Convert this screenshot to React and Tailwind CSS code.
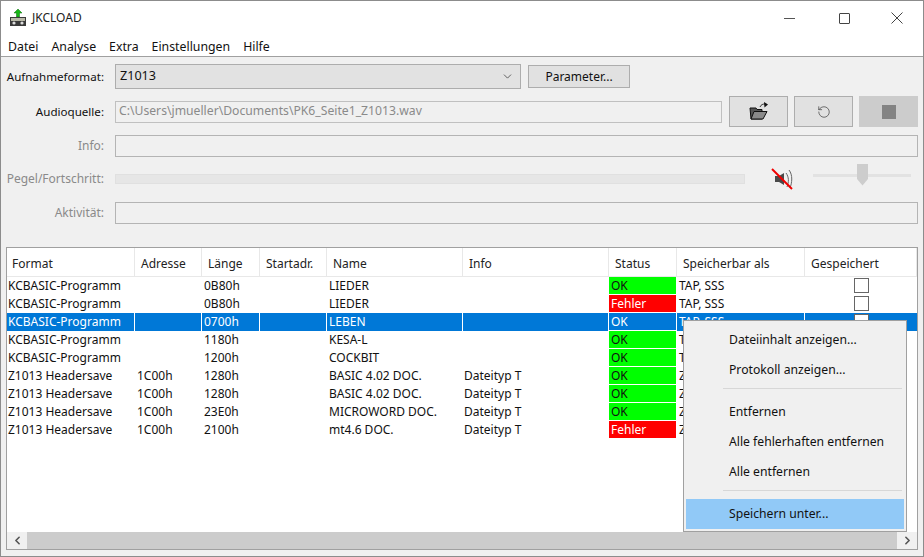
import { ChevronDown, ChevronLeft, ChevronRight, RotateCcw } from 'lucide-react';

const columns = 'grid grid-cols-[128px_67px_58px_67px_136px_146px_68px_128px_112px]';

const headers = ['Format', 'Adresse', 'Länge', 'Startadr.', 'Name', 'Info', 'Status', 'Speicherbar als', 'Gespeichert'];

const rows = [
  { format: 'KCBASIC-Programm', adresse: '', laenge: '0B80h', name: 'LIEDER', info: '', status: 'OK', als: 'TAP, SSS' },
  { format: 'KCBASIC-Programm', adresse: '', laenge: '0B80h', name: 'LIEDER', info: '', status: 'Fehler', als: 'TAP, SSS' },
  { format: 'KCBASIC-Programm', adresse: '', laenge: '0700h', name: 'LEBEN', info: '', status: 'OK', als: 'TAP, SSS', selected: true },
  { format: 'KCBASIC-Programm', adresse: '', laenge: '1180h', name: 'KESA-L', info: '', status: 'OK', als: 'TAP, SSS' },
  { format: 'KCBASIC-Programm', adresse: '', laenge: '1200h', name: 'COCKBIT', info: '', status: 'OK', als: 'TAP, SSS' },
  { format: 'Z1013 Headersave', adresse: '1C00h', laenge: '1280h', name: 'BASIC 4.02 DOC.', info: 'Dateityp T', status: 'OK', als: 'Z80' },
  { format: 'Z1013 Headersave', adresse: '1C00h', laenge: '1280h', name: 'BASIC 4.02 DOC.', info: 'Dateityp T', status: 'OK', als: 'Z80' },
  { format: 'Z1013 Headersave', adresse: '1C00h', laenge: '23E0h', name: 'MICROWORD DOC.', info: 'Dateityp T', status: 'OK', als: 'Z80' },
  { format: 'Z1013 Headersave', adresse: '1C00h', laenge: '2100h', name: 'mt4.6 DOC.', info: 'Dateityp T', status: 'Fehler', als: 'Z80' },
];

const Label = ({ children, enabled }) => (
  <span className={`w-[98px] shrink-0 whitespace-nowrap text-right ${enabled ? 'text-[11.6px] text-[#111]' : 'text-[12px] text-[#8a8a8a]'}`}>{children}</span>
);

const AppIcon = () => (
  <svg width="18" height="18" viewBox="0 0 18 18" className="shrink-0">
    <path d="M9 0 L13 4 H10.5 V8 H7.5 V4 H5 Z" fill="#16b816" stroke="#0b6b0b" strokeWidth="0.5" />
    <rect x="1" y="8" width="16" height="9" fill="#3a3a3a" />
    <rect x="2" y="9" width="14" height="3" fill="#b9b9a8" />
    <circle cx="5" cy="14" r="1.6" fill="#ddd" />
    <circle cx="13" cy="14" r="1.6" fill="#ddd" />
  </svg>
);

const FolderIcon = () => (
  <svg width="20" height="20" viewBox="0 0 20 20">
    <path d="M1 6 H7 L8 7.5 H13 V17 H2 Z" fill="#555" stroke="#111" strokeWidth="1" />
    <path d="M2 17 L5 9.5 H18 L14 17 Z" fill="#8a8a8a" stroke="#111" strokeWidth="1" />
    <path d="M11 5 C12 2.5 14 2 16 2" fill="none" stroke="#333" strokeWidth="1" />
    <path d="M15 0 L19 2.5 L15.5 5.5 Z" fill="#111" />
  </svg>
);

const MuteIcon = () => (
  <svg width="24" height="24" viewBox="0 0 24 24">
    <path d="M4 9 H8 L13 6 V18 L8 15 H4 Z" fill="#4a4a4a" />
    <path d="M15 6 C18 10 18 15 16 20 M18 3 C22 8 21 16 19 21" fill="none" stroke="#666" strokeWidth="1" />
    <path d="M1 2 L21 22" stroke="#f00000" strokeWidth="2" />
  </svg>
);

const Cell = ({ children, className = '' }) => (
  <div className={`h-[18px] overflow-hidden whitespace-nowrap leading-[18px] ${className}`}>{children}</div>
);

const TableRow = ({ row }) => {
  const sep = row.selected ? 'border-r border-white' : 'border-r border-transparent';
  const statusColor = row.status === 'OK' ? (row.selected ? '' : 'bg-[#00ff00] text-[#111]') : 'bg-[#ff0000] text-white';
  return (
    <div className={`${columns} ${row.selected ? 'bg-[#0078d7] text-white' : 'text-[#111]'}`}>
      <Cell className={`${sep} pl-[1px]`}>{row.format}</Cell>
      <Cell className={`${sep} pl-[2px]`}>{row.adresse}</Cell>
      <Cell className={`${sep} pl-[2px]`}>{row.laenge}</Cell>
      <Cell className={sep} />
      <Cell className={`${sep} pl-[2px]`}>{row.name}</Cell>
      <Cell className={`${sep} pl-[1px]`}>{row.info}</Cell>
      <Cell className={`border-r border-b border-white pl-[1px] ${statusColor}`}>
        <span className="pl-[1px]">{row.status}</span>
      </Cell>
      <Cell className={`${sep} pl-[2px]`}>{row.als}</Cell>
      <Cell className="flex justify-center">
        <span className="mt-[1px] h-[15px] w-[15px] border border-[#666] bg-white" />
      </Cell>
    </div>
  );
};

const MenuItem = ({ children, active }) => (
  <div className={`mx-[2px] flex h-[30px] items-center pl-[43px] text-[12.2px] text-[#111] ${active ? 'bg-[#91c9f7]' : ''}`}>{children}</div>
);

const MenuSeparator = () => <div className="mt-[3px] mb-[8px] ml-[39px] mr-[4px] h-px bg-[#d7d7d7]" />;

const ContextMenu = () => (
  <div className="absolute left-[682px] top-[319px] w-[224px] border border-[#a0a0a0] bg-[#f0f0f0] pt-[4px] pb-[2px]">
    <MenuItem>Dateiinhalt anzeigen...</MenuItem>
    <MenuItem>Protokoll anzeigen...</MenuItem>
    <MenuSeparator />
    <MenuItem>Entfernen</MenuItem>
    <MenuItem>Alle fehlerhaften entfernen</MenuItem>
    <MenuItem>Alle entfernen</MenuItem>
    <MenuSeparator />
    <MenuItem active>Speichern unter...</MenuItem>
  </div>
);

export default function App() {
  return (
    <div className="relative flex h-[557px] w-[924px] flex-col overflow-hidden border border-[#8c8c8c] bg-[#f0f0f0] font-['Noto_Sans','Open_Sans',sans-serif] text-[12px] text-[#111]">
      <div className="bg-white">
        <div className="flex h-[36px] items-center pb-[2px]">
          <div className="ml-[8px] flex items-center gap-[5px]">
            <AppIcon />
            <span className="text-[#222]">JKCLOAD</span>
          </div>
          <div className="ml-auto flex items-center text-[#333]">
            <span className="mr-[44px] h-px w-[11px] bg-[#555]" />
            <span className="mr-[41px] h-[11px] w-[11px] rounded-[1px] border border-[#444]" />
            <svg width="12" height="12" viewBox="0 0 12 12" className="mr-[20px]">
              <path d="M0.5 0.5 L11.5 11.5 M11.5 0.5 L0.5 11.5" stroke="#444" strokeWidth="1" />
            </svg>
          </div>
        </div>
        <div className="flex h-[20px] items-center gap-[13px] border-b border-[#a0a0a0] pl-[7px] pt-[1px] text-[12.3px]">
          <span>Datei</span>
          <span>Analyse</span>
          <span>Extra</span>
          <span>Einstellungen</span>
          <span>Hilfe</span>
        </div>
      </div>

      <div className="flex items-center pt-[7px] pl-[5px]">
        <Label enabled>Aufnahmeformat:</Label>
        <div className="ml-[11px] flex h-[25px] w-[406px] items-center justify-between border border-[#adadad] bg-[#e2e2e2] pl-[4px] pr-[6px]">
          <span className="text-[12.6px]">Z1013</span>
          <ChevronDown size={13} strokeWidth={1.5} color="#444" />
        </div>
        <button className="ml-[7px] h-[23px] w-[102px] border border-[#adadad] bg-[#e1e1e1]">Parameter...</button>
      </div>

      <div className="flex items-center pt-[7px] pl-[5px]">
        <Label enabled>Audioquelle:</Label>
        <div className="ml-[11px] flex h-[22px] w-[607px] items-center border border-[#c0c0c0] bg-[#f0f0f0] pl-[3px] text-[12.2px] text-[#8a8a8a]">
          C:\Users\jmueller\Documents\PK6_Seite1_Z1013.wav
        </div>
        <button className="ml-[7px] flex h-[31px] w-[59px] items-center justify-center border border-[#adadad] bg-[#e1e1e1]">
          <FolderIcon />
        </button>
        <button className="ml-[6px] flex h-[31px] w-[59px] items-center justify-center border border-[#adadad] bg-[#e1e1e1]">
          <RotateCcw size={14} strokeWidth={1.25} color="#444" />
        </button>
        <button className="ml-[6px] flex h-[31px] w-[59px] items-center justify-center border border-[#cccccc] bg-[#cccccc]">
          <span className="h-[14px] w-[14px] bg-[#838383]" />
        </button>
      </div>

      <div className="flex items-center pt-[8px] pl-[5px]">
        <Label>Info:</Label>
        <div className="ml-[11px] h-[22px] w-[803px] border border-[#b4b4b4]" />
      </div>

      <div className="flex h-[45px] items-center pb-[1px] pl-[5px]">
        <Label>Pegel/Fortschritt:</Label>
        <div className="ml-[11px] h-[10px] w-[630px] border border-[#e0e0e0] bg-[#e6e6e6]" />
        <div className="ml-[26px]">
          <MuteIcon />
        </div>
        <div className="relative ml-[18px] h-[3px] w-[98px] -translate-y-[4px] bg-[#e2e2e2]">
          <span className="absolute left-[44px] -top-[10px] h-[22px] w-[11px] bg-[#cdcdcd] [clip-path:polygon(0_0,100%_0,100%_70%,50%_100%,0_70%)]" />
        </div>
      </div>

      <div className="flex items-center pl-[5px]">
        <Label>Aktivität:</Label>
        <div className="ml-[11px] h-[22px] w-[803px] border border-[#b4b4b4]" />
      </div>

      <div className="mt-[23px] ml-[5px] flex h-[303px] w-[912px] flex-col border border-[#a0a0a0] bg-white">
        <div className={`${columns} h-[29px] items-stretch`}>
          {headers.map((h) => (
            <div key={h} className="flex items-center border-r border-b border-[#e8e8e8] pl-[6px] pt-[3px] first:pl-[5px] text-[#222]">{h}</div>
          ))}
        </div>
        <div className="flex-1">
          {rows.map((row, i) => (
            <TableRow key={i} row={row} />
          ))}
        </div>
        <div className="flex h-[17px] items-center bg-[#cccccc]">
          <div className="flex h-full w-[20px] items-center justify-center bg-[#f0f0f0]">
            <ChevronLeft size={13} strokeWidth={3} color="#555" />
          </div>
          <div className="ml-auto flex h-full w-[20px] items-center justify-center bg-[#f0f0f0]">
            <ChevronRight size={13} strokeWidth={3} color="#555" />
          </div>
        </div>
      </div>

      <ContextMenu />
    </div>
  );
}
